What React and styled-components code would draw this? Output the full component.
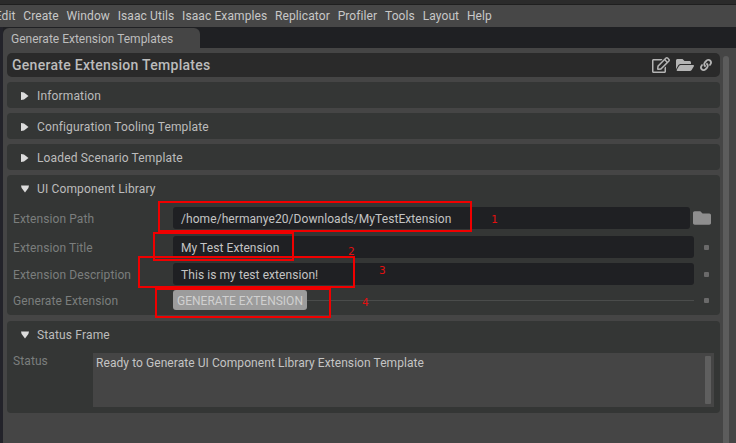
import React from 'react'
import styled, { createGlobalStyle } from 'styled-components'
import { FaRegEdit, FaFolderOpen, FaLink, FaFolder } from 'react-icons/fa'

const GlobalStyle = createGlobalStyle`
  html, body {
    margin: 0;
    padding: 0;
    background: #454545;
  }
  * {
    box-sizing: border-box;
  }
`

const Root = styled.div`
  position: relative;
  width: 736px;
  height: 443px;
  overflow: hidden;
  background: #454545;
  font-family: Roboto, "Liberation Sans", sans-serif;
  font-size: 12px;
`

const TopStrip = styled.div`
  height: 5px;
  background: #2b2b2b;
  border-bottom: 1px solid #1f1f1f;
`

const MenuBar = styled.div`
  display: flex;
  align-items: center;
  gap: 7.75px;
  height: 22px;
  margin-left: -5.25px;
  background: #474747;
  color: #c8c8c8;
`

const MenuItem = styled.span`
  letter-spacing: 0.1px;
  white-space: nowrap;
`

const Dock = styled.div`
  display: flex;
  height: 416px;
`

const DockEdge = styled.div`
  width: 3px;
  background: #23232a;
`

const DockMain = styled.div`
  flex: 1;
  display: flex;
  flex-direction: column;
`

const TabBand = styled.div`
  height: 21px;
  padding-top: 1px;
  background: #1f2023;
`

const Tab = styled.div`
  display: flex;
  align-items: center;
  width: 197px;
  height: 20px;
  padding: 1px 0 0 8px;
  border-radius: 6px 6px 0 0;
  background: #454545;
  color: #bdbdbd;
`

const Body = styled.div`
  flex: 1;
  display: flex;
  gap: 3px;
  padding: 5px 7px 0 4px;
`

const Panel = styled.div`
  width: 713px;
  display: flex;
  flex-direction: column;
  gap: 5px;
`

const Scrollbar = styled.div`
  width: 6px;
  margin-top: 3px;
  border-radius: 3px 3px 0 0;
  background: #5c5c5c;
`

const TitleBar = styled.div`
  display: flex;
  align-items: center;
  justify-content: space-between;
  height: 24px;
  padding: 0 8px 0 5px;
  border-radius: 5px;
  background: #2a2a2a;
  color: #bcbcbc;
  font-size: 14px;
  font-weight: 500;
  letter-spacing: 0.28px;
`

const TitleIcons = styled.div`
  display: flex;
  align-items: center;
  gap: 6px;
  color: #b4b4b4;
`

const Frame = styled.div`
  margin-top: ${p => p.$gap || 0}px;
  border-radius: 4px;
  background: #343635;
`

const FrameHeader = styled.div`
  display: flex;
  align-items: center;
  gap: 8px;
  height: 26px;
  padding: 1px 0 0 14px;
  color: #bcbcbc;
  letter-spacing: 0.15px;
`

const Arrow = styled.svg`
  width: 8px;
  height: 8px;
  fill: #dcdcdc;
`

const Rows = styled.div`
  display: flex;
  flex-direction: column;
  gap: 5px;
  padding: 6px 6px 5px;
`

const Row = styled.div`
  display: flex;
  align-items: center;
  height: ${p => (p.$short ? '20px' : '22px')};
  margin-bottom: ${p => (p.$spaced ? '2px' : '0')};
`

const Label = styled.span`
  flex: 0 0 160px;
  padding-top: 2px;
  color: #7b7e7d;
  letter-spacing: 0.1px;
  white-space: nowrap;
`

const Field = styled.div`
  flex: 1;
  display: flex;
  align-items: center;
  align-self: stretch;
  padding: 1px 0 0 8px;
  border-radius: 3px;
  background: #1f2023;
  color: #c4c4c4;
  letter-spacing: 0.07px;
  white-space: nowrap;
`

const RowEnd = styled.div`
  flex: 0 0 ${p => p.$wide ? '24px' : '20px'};
  display: flex;
  align-items: center;
  justify-content: flex-end;
  padding-right: ${p => p.$wide ? '3px' : '5px'};
  color: #8e8e8e;
`

const Dot = styled.span`
  width: 5px;
  height: 5px;
  border-radius: 1px;
  background: #6a6a6a;
`

const GenerateButton = styled.div`
  display: flex;
  align-items: center;
  justify-content: center;
  width: 134px;
  height: 20px;
  padding-top: 1px;
  border-radius: 3px;
  background: #9c9c9c;
  color: #d0d0d0;
`

const Rule = styled.div`
  flex: 1;
  height: 1px;
  background: #4a4c4b;
`

const StatusRow = styled.div`
  display: flex;
  padding: 6px 6px 6px;
`

const StatusLabel = styled.span`
  flex: 0 0 80px;
  padding-top: 1px;
  color: #7b7e7d;
  letter-spacing: 0.1px;
`

const StatusBox = styled.div`
  flex: 1;
  display: flex;
  justify-content: space-between;
  height: 54px;
  padding: 3px;
  background: #454545;
  color: #c4c4c4;
  letter-spacing: 0.07px;
`

const StatusScroll = styled.div`
  width: 6px;
  border-radius: 1px;
  background: #5f5f5f;
`

const Mark = styled.div`
  position: absolute;
  left: ${p => p.$x}px;
  top: ${p => p.$y}px;
  width: ${p => p.$w}px;
  height: ${p => p.$h}px;
  border: 2px solid #f00000;
`

const Digit = styled.span`
  position: absolute;
  left: ${p => p.$x}px;
  top: ${p => p.$y}px;
  color: #e01010;
  font-family: "DejaVu Sans Mono", monospace;
  font-size: 11px;
  line-height: 13px;
`

const menu = ['Edit', 'Create', 'Window', 'Isaac Utils', 'Isaac Examples', 'Replicator', 'Profiler', 'Tools', 'Layout', 'Help']

const RightArrow = () => (
  <Arrow viewBox="0 0 8 8"><path d="M0 0 L3 0.6 L7.5 4 L3 7.4 L0 8 Z" /></Arrow>
)

const DownArrow = () => (
  <Arrow viewBox="0 0 8 8"><path d="M0 0.5 L8 0.5 L7.4 3 L4 7.5 L0.6 3 Z" /></Arrow>
)

export default function App() {
  return (
    <Root>
      <GlobalStyle />
      <TopStrip />
      <MenuBar>
        {menu.map(m => <MenuItem key={m}>{m}</MenuItem>)}
      </MenuBar>
      <Dock>
        <DockEdge />
        <DockMain>
          <TabBand>
            <Tab>Generate Extension Templates</Tab>
          </TabBand>
          <Body>
            <Panel>
              <TitleBar>
                Generate Extension Templates
                <TitleIcons>
                  <FaRegEdit size={18} />
                  <FaFolderOpen size={18} />
                  <FaLink size={12} />
                </TitleIcons>
              </TitleBar>
              <Frame><FrameHeader><RightArrow />Information</FrameHeader></Frame>
              <Frame><FrameHeader><RightArrow />Configuration Tooling Template</FrameHeader></Frame>
              <Frame><FrameHeader><RightArrow />Loaded Scenario Template</FrameHeader></Frame>
              <Frame>
                <FrameHeader><DownArrow />UI Component Library</FrameHeader>
                <Rows>
                  <Row $spaced>
                    <Label>Extension Path</Label>
                    <Field>/home/hermanye20/Downloads/MyTestExtension</Field>
                    <RowEnd $wide><FaFolder size={18} /></RowEnd>
                  </Row>
                  <Row>
                    <Label>Extension Title</Label>
                    <Field>My Test Extension</Field>
                    <RowEnd><Dot /></RowEnd>
                  </Row>
                  <Row>
                    <Label>Extension Description</Label>
                    <Field>This is my test extension!</Field>
                    <RowEnd><Dot /></RowEnd>
                  </Row>
                  <Row $short>
                    <Label>Generate Extension</Label>
                    <GenerateButton>GENERATE EXTENSION</GenerateButton>
                    <Rule />
                    <RowEnd><Dot /></RowEnd>
                  </Row>
                </Rows>
              </Frame>
              <Frame $gap={1}>
                <FrameHeader><DownArrow />Status Frame</FrameHeader>
                <StatusRow>
                  <StatusLabel>Status</StatusLabel>
                  <StatusBox>
                    Ready to Generate UI Component Library Extension Template
                    <StatusScroll />
                  </StatusBox>
                </StatusRow>
              </Frame>
            </Panel>
            <Scrollbar />
          </Body>
        </DockMain>
      </Dock>
      <Mark $x={158} $y={201} $w={314} $h={31} />
      <Mark $x={153} $y={232} $w={141} $h={29} />
      <Mark $x={138} $y={256} $w={217} $h={32} />
      <Mark $x={155} $y={288} $w={176} $h={30} />
      <Digit $x={491} $y={213}>1</Digit>
      <Digit $x={348} $y={245}>2</Digit>
      <Digit $x={379} $y={264}>3</Digit>
      <Digit $x={362} $y={296}>4</Digit>
    </Root>
  )
}
